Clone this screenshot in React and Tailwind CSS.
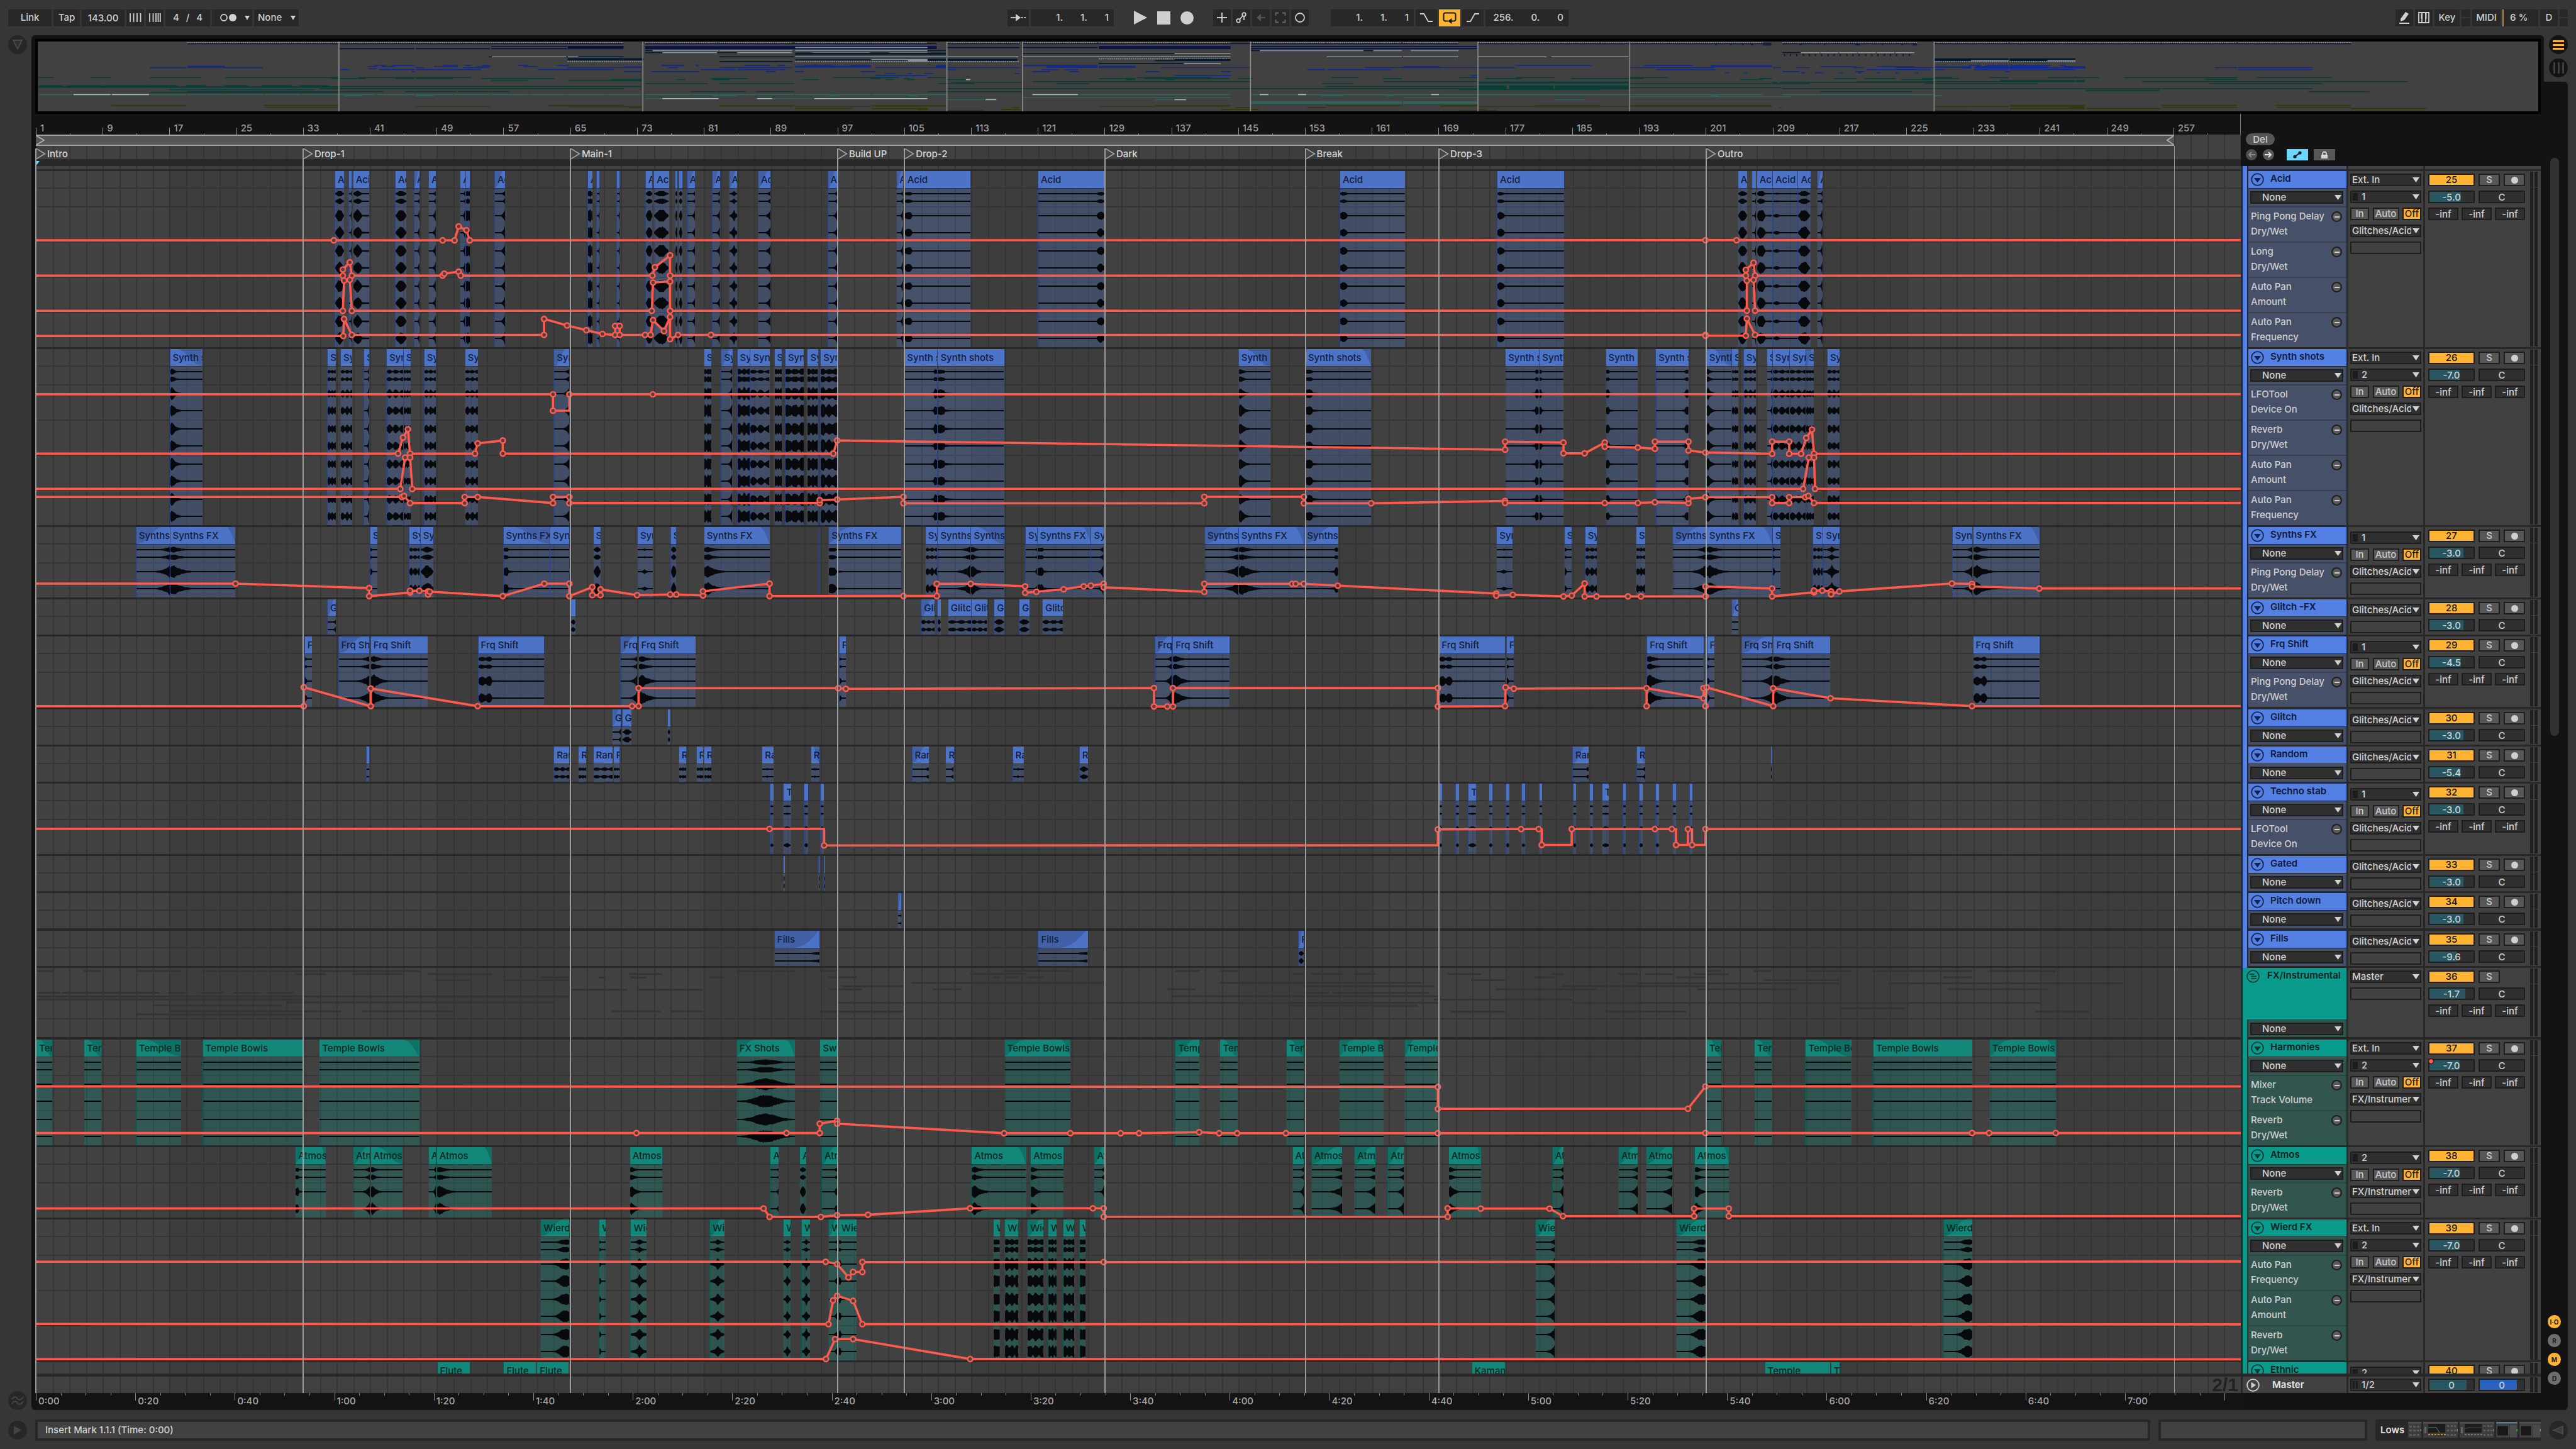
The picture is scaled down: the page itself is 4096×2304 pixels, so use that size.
import React from "react";

/* ------------------------------------------------------------------ */
/* Arrangement geometry                                               */
/* ------------------------------------------------------------------ */

const SPAN = 3506; // drawing units across the 264 visible bars
const BARS = 264;
const TRACKS_TOP = 264;

// Each zone maps its own drawing units to arrangement units: [x0, dx, y0, dy].
const Z = [-57.2, 0.65306, 0, 0.35714];
const Y = [966.8, 0.9694, 0, 0.35714];
const W = [2662.8, 0.87755, 0, 0.35714];
const A1 = [-57.2, 0.86735, 480, 0.5102];
const A2 = [-57.2, 0.86735, 1248, 0.67347];
const B1 = [1062.8, 0.81633, 240, 0.5102];
const B2 = [1062.8, 0.81633, 1000, 0.79082];
const C1 = [2222.8, 0.82143, 240, 0.66327];
const C2 = [2222.8, 0.82143, 1248, 0.63265];

const mapX = (z, x) => z[0] + x * z[1];
const mapY = (z, y) => z[2] + y * z[3] - TRACKS_TOP;

function clips(zone, text, label) {
  return text.split(" ").map((item) => {
    const m = item.match(/^(\d+)-(\d+)([a-zA-Z])([<>(){]*)$/);
    const x = Math.max(0, mapX(zone, +m[1]));
    return { x, w: mapX(zone, +m[2]) - x, wave: m[3], fade: m[4], label };
  });
}

/* ------------------------------------------------------------------ */
/* Tracks                                                             */
/* ------------------------------------------------------------------ */

const ACID = "Glitches/Acid";
const FXI = "FX/Instrumental";

const TRACKS = [
  {
    name: "Acid", num: 25, vol: "-5.0", fill: 72, ext: true, ch: "1", out: ACID,
    autos: [["Ping Pong Delay", "Dry/Wet"], ["Long", "Dry/Wet"], ["Auto Pan", "Amount"], ["Auto Pan", "Frequency"]],
    clips: [
      ...clips(Z, "815-838b 849-857r 859-899B 962-990b 1008-1022r< 1043-1061r 1120-1133r 1133-1144x 1204-1230r< 1430-1443x 1452-1460r 1501-1509r"),
      ...clips(Y, "2-14b 16-41b 51-55b 57-63b 70-84r< 112-125r< 139-153p< 187-208r< 301-317r< 414-425r< 427-536a 646-755z 1141-1248a 1399-1509a"),
      ...clips(W, "49-66b 74-82r 83-112B 112-158q 158-181b 193-203r<"),
    ],
  },
  {
    name: "Synth shots", num: 26, vol: "-7.0", fill: 68, ext: true, ch: "2", out: ACID,
    autos: [["LFOTool", "Device On"], ["Reverb", "Dry/Wet"], ["Auto Pan", "Amount"], ["Auto Pan", "Frequency"]],
    clips: [
      ...clips(A1, "311-371d> 600-616m 624-646m 667-677r 708-739m 739-753m 777-799m 852-876m 1015-1044r< 1290-1304x 1322-1343r< 1351-1375x 1375-1411m 1419-1433x 1439-1474x 1480-1500x 1504-1535x"),
      ...clips(B1, "389-454e 454-584s 1040-1103d> 1170-1299s)"),
      ...clips(C1, "138-203e 204-251s 332-395s 429-493e 527-576d> 576-590m 599-623m 644-655r 655-688m 688-720m 720-736m< 761-785m"),
    ],
  },
  {
    name: "Synths FX", num: 27, vol: "-3.0", fill: 77, ch: "1", out: ACID,
    autos: [["Ping Pong Delay", "Dry/Wet"]],
    clips: [
      ...clips(A1, "249-311r< 311-432d) 678-692d 750-770m 770-795b 922-1008s> 1008-1044f 1087-1101b 1168-1197g 1229-1240b 1290-1411d) 1501-1503f"),
      ...clips(B1, "242-384s( 430-453m 454-519r 519-584d> 625-648e 648-753s) 753-778r 974-1040r< 1040-1168d) 1168-1235e<"),
      ...clips(C1, "121-153g 252-267d 292-316m 391-409m 462-526r< 527-655d) 655-671d 733-753m 753-785p 1003-1042r 1043-1172d)"),
    ],
  },
  {
    name: "Glitch -FX", num: 28, vol: "-3.0", fill: 77, out: ACID, autos: [],
    clips: [
      ...clips(A1, "600-616r< 1046-1055b"),
      ...clips(B1, "422-449m< 454-461b 474-520m 520-551m 564-584b 613-633b 658-698m"),
      ...clips(C1, "576-590f<"),
    ],
  },
  {
    name: "Frq Shift", num: 29, vol: "-4.5", fill: 72, ch: "1", out: ACID, wideGap: true,
    autos: [["Ping Pong Delay", "Dry/Wet"]],
    clips: [
      ...clips(A1, "558-572d 620-677r< 679-784d 876-998S 1137-1168r< 1170-1275d"),
      ...clips(B2, "262-276d 877-910r< 912-1023d"),
      ...clips(C1, "9-138S 140-155d 412-522d 528-543d 595-655r< 657-767d 1043-1173S"),
    ],
  },
  {
    name: "Glitch", num: 30, vol: "-3.0", fill: 77, out: ACID, autos: [],
    clips: clips(A1, "1122-1138r< 1140-1158b 1224-1229b"),
  },
  {
    name: "Random", num: 31, vol: "-5.4", fill: 71, out: ACID, autos: [],
    clips: [
      ...clips(A1, "671-677f 1015-1044m 1060-1075m 1087-1123m 1124-1136m 1244-1258m 1276-1289m 1290-1304m"),
      ...clips(B2, "112-135g 207-225g> 404-437e< 470-486r 600-623g 730-747b"),
      ...clips(C1, "268-300e< 392-409r> 651-654b"),
    ],
  },
  {
    name: "Techno stab", num: 32, vol: "-3.0", fill: 77, ch: "1", out: ACID,
    autos: [["LFOTool", "Device On"]],
    clips: [
      ...clips(B2, "128-135o 154-169o 194-202o 226-233o"),
      ...clips(C1, "10-16o 42-49o 66-82o 106-113o 139-146o 170-177o 204-210o 269-275o 301-308o 325-339o 365-372o 397-405o 429-436o 462-469o 494-501o"),
    ],
  },
  {
    name: "Gated", num: 33, vol: "-3.0", fill: 77, out: ACID, autos: [],
    clips: clips(B2, "154-157x 222-225x 233-236x"),
  },
  {
    name: "Pitch down", num: 34, vol: "-3.0", fill: 77, out: ACID, autos: [], wideGap: true,
    clips: clips(B2, "376-384r<"),
  },
  {
    name: "Fills", num: 35, vol: "-9.6", fill: 61, out: ACID, autos: [],
    clips: clips(B2, "136-225l{ 650-747l{ 1157-1168b<"),
  },
  { name: "FX/Instrumental", num: 36, vol: "-1.7", fill: 82, group: true, wideGap: true, teal: true, clips: [], autos: [] },
  {
    name: "Harmonies", num: 37, vol: "-7.0", fill: 68, ext: true, ch: "2", out: FXI, teal: true, automated: true,
    autos: [["Mixer", "Track Volume"], ["Reverb", "Dry/Wet"]],
    clips: [
      ...clips(A2, "66-96f> 154-186f> 249-332f> 371-555f 585-769f)", "Temple Bowls"),
      ...clips(A2, "1350-1457P()", "FX Shots"),
      ...clips(A2, "1503-1535f", "Swish"),
      ...clips(B2, "584-713f() 917-964f< 1004-1039f> 1133-1168f> 1236-1323f() 1364-1429f(", "Temple Bowls"),
      ...clips(C2, "527-557f> 620-654f> 719-808f> 850-1042f 1075-1204f()", "Temple Bowls"),
    ],
  },
  {
    name: "Atmos", num: 38, vol: "-7.0", fill: 68, ch: "2", out: FXI, teal: true,
    autos: [["Reverb", "Dry/Wet"]],
    clips: [
      ...clips(A2, "541-598s() 647-678r< 679-738d> 785-799r 800-902d) 1154-1214d 1412-1428e 1466-1478b 1506-1535e<"),
      ...clips(B2, "520-627d) 635-700d 759-780r< 1145-1168r 1182-1243r< 1266-1307r< 1331-1363r<"),
      ...clips(C2, "28-92d) 229-251r< 357-395r< 410-462r< 504-571d)"),
    ],
  },
  {
    name: "Wierd FX", num: 39, vol: "-7.0", fill: 68, ext: true, ch: "2", out: FXI, teal: true,
    autos: [["Auto Pan", "Frequency"], ["Auto Pan", "Amount"], ["Reverb", "Dry/Wet"]],
    clips: [
      ...clips(A2, "991-1044k< 1098-1111d 1156-1186p 1301-1328p< 1436-1450p 1469-1485p"),
      ...clips(B2, "242-261r< 261-297s 563-576x 585-612x 629-661x< 669-686x 698-721x 730-743x"),
      ...clips(C2, "196-234r< 469-526k< 986-1042k<"),
    ],
  },
  {
    name: "Ethnic", num: 40, vol: "-7.0", fill: 68, ch: "2", out: FXI, teal: true, autos: [],
    clips: [
      ...clips(A2, "801-861f 923-983f 984-1043f", "Flute"),
      ...clips(C2, "73-138f", "Kaman"),
      ...clips(C2, "640-767f 768-785f", "Temple"),
    ],
  },
];

const LOCATORS = [
  [1, "Intro"], [33, "Drop-1"], [65, "Main-1"], [97, "Build UP"], [105, "Drop-2"],
  [129, "Dark"], [153, "Break"], [169, "Drop-3"], [201, "Outro"],
];

/* ------------------------------------------------------------------ */
/* Automation: zone, then "x,y" points; "!" hides the breakpoint       */
/* ------------------------------------------------------------------ */

const AUTOMATION = [
  [Z, "88,1070! 813,1070 1078,1070 1107,1070 1117,1008 1136,1025 1144,1070", C1, "526,214 586,214 1560,214!"],
  [Z, "88,1227! 835,1227 835,1200 852,1168 857,1227 1078,1227 1082,1218 1117,1210 1122,1227", Y, "14,1227 18,1190 43,1137 43,1227", C1, "604,299 604,285 619,268 622,299 1560,299!"],
  [Z, "88,1384! 835,1384 838,1249 852,1246 857,1384", Y, "13,1384 15,1258 43,1253 43,1384", C1, "606,383 606,311 619,309 622,383 1560,383!"],
  [Z, "88,1496! 836,1496 838,1420 857,1491 1325,1491 1325,1420 1381,1449 1428,1470 1467,1487 1498,1491 1498,1451 1509,1451 1509,1491", Y, "2,1491 11,1491 15,1425 33,1474 43,1411 43,1510 56,1491 110,1491", C1, "526,441 526,443 604,443 606,402 622,441 1560,441!"],
  [A1, "66,288! 1014,288 1014,339 1044,339! 1044,288 1197,288", C1, "1560,583!"],
  [A1, "66,473! 730,473 739,423 748,397 752,473 871,473 876,441 922,432 922,473 1528,473 1535,432", B1, "1560,931 1560,906", C1, "251,699 251,725 292,725 331,699 331,709 395,711 428,714 428,697 493,697 493,718 526,723 655,726 655,697 688,697 688,726 711,726 721,688 732,668 736,726 1560,726!"],
  [A1, "66,583! 734,583 743,485 752,485 756,583", C1, "715,810 726,735 736,735 738,810 1560,810!"],
  [A1, "66,608! 737,608 741,605 752,627 852,627 852,608 876,608 1014,627 1014,608 1044,608 1044,627 1503,627 1503,618 1535,616", B1, "388,1078 388,1098 974,1098 974,1078 1168,1078 1168,1098 1299,1098", C1, "138,839 138,844 331,844 395,844 428,842 493,844 493,834 526,830 655,830 655,844 688,844 688,830 719,830 725,827 736,844 1560,844!"],
  [A1, "66,878! 432,878 677,892 677,917 752,906 752,900 769,900 785,902 785,912 788,903 922,917 998,878 1044,878 1044,917 1086,889 1086,914 1101,914 1101,896 1168,914 1229,912 1240,912 1289,915 1289,902 1411,878 1411,917", B1, "388,1387 453,1387 453,1349 519,1349 625,1357 625,1377 647,1374 700,1366 739,1357 753,1355 778,1349 778,1360 974,1374 974,1349 1145,1349 1152,1349 1168,1349 1234,1355", C1, "121,1061 121,1066 153,1064 251,1068 267,1066 292,1037 292,1068 315,1068 376,1068 401,1068 526,1068 526,1044 655,1049 655,1068 736,1058 736,1054 752,1054 769,1056 769,1063 785,1056 1003,1037 1042,1038 1042,1044 1172,1049 1560,1049!"],
  [A1, "66,1260! 557,1260 557,1201 680,1260 680,1205 876,1260 1159,1260 1171,1260 1171,1204 1537,1204 1551,1206", B2, "876,119 876,156 902,156 913,156 913,119 1429,119 1429,156", C1, "138,1331 139,1286 155,1289 412,1288 412,1331 412,1288! 522,1312 522,1288 526,1331 528,1286 657,1331 657,1288 768,1312 1042,1331 1560,1331!"],
  [A2, "66,104! 1411,104 1511,104! 1511,143", B2, "1429,435! 1429,403", C2, "169,111 203,111 209,111! 209,151 267,151! 267,111 428,111 461,111 469,111! 469,151 492,151! 492,111 500,111! 500,151 526,151! 526,111 1560,111!"],
  [A2, "66,712!", B2, "1429,921 1429,965", C2, "492,814 526,758 1560,758!"],
  [A2, "66,822! 1167,822 1442,822 1503,822 1503,800 1535,793 1535,800", B2, "584,1014 713,1014 811,1014 847,1014 964,1012 1003,1014 1038,1014 1133,1014 1429,1014", C2, "526,875 1042,875 1075,875 1204,875 1560,875!"],
  [A2, "66,1000! 1400,1000 1411,1020 1505,1020 1535,1016", B2, "319,1178 518,1165 757,1165 778,1165 778,1182 1448,1182 1448,1165", C2, "91,1065 224,1065 250,1084 504,1084 504,1065 571,1065 571,1084 1560,1084!"],
  [A2, "66,1126! 1514,1126", B2, "259,1277 281,1304 290,1293 308,1293 308,1273 778,1273", C2, "1560,1198!"],
  [A2, "66,1273!", B2, "242,1398 251,1350 259,1341 290,1351 308,1398", C2, "1560,1356!"],
  [A2, "66,1356!", B2, "237,1468 255,1428 290,1428 518,1468", C2, "1560,1444!"],
];

function readCurve(parts) {
  const pts = [];
  for (let i = 0; i < parts.length; i += 2) {
    for (const p of parts[i + 1].split(" ")) {
      const [x, y] = p.replace("!", "").split(",").map(Number);
      pts.push({ x: mapX(parts[i], x), y: mapY(parts[i], y), node: !p.endsWith("!") });
    }
  }
  pts[0].x = 0;
  pts[pts.length - 1].x = SPAN;
  return pts;
}

function Automation() {
  return (
    <svg className="pointer-events-none absolute top-0 left-0 h-[1920px] w-full" viewBox={`0 0 ${SPAN} 1920`} preserveAspectRatio="none" aria-hidden="true">
      {AUTOMATION.map((parts, i) => {
        const pts = readCurve(parts);
        return (
          <g key={i} stroke="#ff5a4c">
            <polyline points={pts.map((p) => `${p.x.toFixed(1)},${p.y.toFixed(1)}`).join(" ")} fill="none" strokeWidth="3.6" strokeLinejoin="round" />
            {pts.filter((p) => p.node).map((p, j) => (
              <circle key={j} cx={p.x} cy={p.y} r="4" fill="#4a4144" strokeWidth="2.6" />
            ))}
          </g>
        );
      })}
    </svg>
  );
}

/* ------------------------------------------------------------------ */
/* Clips and wave forms                                               */
/* ------------------------------------------------------------------ */

function envelope(kind, t) {
  switch (kind) {
    case "b": return 0.8 * Math.pow(Math.sin(Math.PI * Math.min(1, t)), 1.1) + 0.08;
    case "B": return t < 0.55 ? 0.9 * Math.sin((Math.PI * (t + 0.05)) / 0.62) : 0.12;
    case "f": return 0.05;
    case "g": return 0.05 + 0.35 * Math.exp(-Math.abs(t - 0.45) * 9);
    case "a": return t < 0.1 ? 0.3 + 0.3 * Math.sin(t * 31) : 0.06;
    case "z": return envelope("a", 1 - t);
    case "s": return t < 0.1 ? 0.5 * Math.sin(Math.PI * (0.25 + t * 5)) + 0.15 : 0.05 + 0.35 * Math.exp(-t * 9);
    case "e": return envelope("s", 1 - t);
    case "q": return t < 0.3 ? 0.3 * Math.sin((Math.PI * t) / 0.3) : 0.05;
    case "d": return t < 0.05 ? 0.6 + t * 8 : 0.95 * Math.exp(-(t - 0.05) * 8);
    case "r": return 0.95 * Math.exp(-(1 - t) * 5.5);
    case "l": return 0.5 * Math.exp(-(1 - t) * 4);
    case "k": return 0.08 + 0.8 * Math.exp(-Math.pow((t - 0.85) * 4.5, 2));
    case "p": return 0.1 + 0.9 * Math.exp(-Math.abs(t - 0.55) * 6);
    case "m": return 0.12 + 0.5 * Math.abs(Math.sin(t * Math.PI * 2.5 + 0.3));
    case "x": return 0.45 + 0.5 * Math.abs(Math.sin(t * Math.PI * 2.5 + 0.6));
    case "S": return t < 0.2 ? 0.3 + 0.4 * Math.abs(Math.sin(t * 30)) : 0.1 * (1 - t) + 0.04;
    case "P": return 0.08 + 0.8 * Math.exp(-Math.pow((t - 0.5) * 4.2, 2));
    default: return 0.32 * Math.sin(Math.PI * t);
  }
}

function wavePath(kind, w, cy, amp, seed) {
  let s = seed * 7919 + 13;
  const top = [];
  const bottom = [];
  const n = Math.max(3, Math.round(w / 2));
  for (let i = 0; i <= n; i++) {
    s = (s * 1103515245 + 12345) % 2147483648;
    const h = Math.max(1.1, envelope(kind, i / n) * amp * (0.75 + (0.25 * s) / 2147483648));
    const x = ((i / n) * w).toFixed(1);
    top.push(`${x},${(cy - h).toFixed(1)}`);
    bottom.unshift(`${x},${(cy + h).toFixed(1)}`);
  }
  return `M${top.join("L")}L${bottom.join("L")}Z`;
}

function fadePath(fade, w) {
  let d = "";
  if (fade.includes("<")) d += `M0 0V27C${w * 0.4} 25 ${w * 0.45} 2 ${w * 0.8} 0Z`;
  if (fade.includes(">")) d += `M${w} 0V27C${w * 0.6} 25 ${w * 0.55} 2 ${w * 0.2} 0Z`;
  if (fade.includes("(")) d += `M0 0V27C${w * 0.1} 20 ${w * 0.12} 4 ${w * 0.3} 0Z`;
  if (fade.includes(")")) d += `M${w} 0V27C${w * 0.96} 18 ${w * 0.92} 4 ${w * 0.86} 0Z`;
  if (fade.includes("{")) d += `M0 0V27H${w * 0.45}C${w * 0.75} 24 ${w * 0.85} 8 ${w * 0.97} 0Z`;
  return d;
}

const pct = (v) => `${((v / SPAN) * 100).toFixed(3)}%`;

function Clip({ clip, track, height, seed }) {
  const { x, w, wave, fade } = clip;
  const centres = [[8, 5.5], [20, 5.5]];
  for (let i = 0; i < track.autos.length; i++) centres.push([28 + i * 56 + 15, 12], [28 + i * 56 + 42, 12]);
  const bodyH = height - 28;
  return (
    <div className="absolute inset-y-0 flex flex-col overflow-hidden" style={{ left: pct(x), width: pct(w) }}>
      <div className={`relative flex h-[27px] shrink-0 items-center overflow-hidden border-l pl-1 ${track.teal ? "border-[#0b5a50] bg-[#138779]" : "border-[#2c4584] bg-[#4d73c6]"}`}>
        {fade && (
          <svg className="absolute inset-0 h-full w-full" viewBox={`0 0 ${w} 27`} preserveAspectRatio="none" aria-hidden="true">
            <path d={fadePath(fade, w)} fill={track.teal ? "#0f7166" : "#4160a5"} />
          </svg>
        )}
        {w > 8 && <span className={`relative whitespace-nowrap ${track.teal ? "text-[#062722]" : "text-[#121d3a]"}`}>{clip.label || track.name}</span>}
      </div>
      <div className={`mt-px min-h-0 flex-1 border-l ${track.teal ? "border-[#0b5a50] bg-[#0a9b8c]/25" : "border-[#2c4584] bg-[#5480e4]/25"}`}>
        <svg className="block h-full w-full" viewBox={`0 0 ${w} ${bodyH}`} preserveAspectRatio="none" aria-hidden="true">
          <path d={centres.map(([cy, amp], i) => wavePath(wave, w, cy, amp, seed + (i % 2))).join("")} fill="#07090d" />
        </svg>
      </div>
    </div>
  );
}

/* ------------------------------------------------------------------ */
/* Group overview lines                                               */
/* ------------------------------------------------------------------ */

const GROUP_LINES = [
  [A2, "66-97,439 154-186,439 249-332,439 372-583,439 585-769,439 541-598,446 647-738,446 785-902,446 799-861,461 923-1043,461 991-1043,454 66-111,490 114-293,490 308-340,490 368-409,490 429-477,490 489-538,490 66-1043,499 66-555,506 525-1015,513 280-517,520 311-626,534 663-830,534 249-555,541 1045-1150,483 1168-1289,483 1122-1211,534 1229-1289,534 1350-1457,439 1154-1214,446 1156-1185,454 1098-1111,454 1301-1328,454"],
  [B2, "226-259,687 225-388,769 242-297,700 267-388,718 242-307,724 404-778,711 445-502,724 518-627,693 584-713,687 563-576,700 585-612,700 629-661,700 261-1429,751 917-964,687 1004-1039,687 902-957,724 909-1429,738 1005-1396,711 1146-1168,693 1182-1243,693 1168-1423,718 1168-1218,731 1224-1412,731 1138-1389,757 1266-1307,693 1454-1560,769"],
  [C2, "27-91,475 72-138,490 120-315,513 0-267,539 33-138,569 195-234,483 229-251,475 249-526,505 267-1173,547 332-489,569 357-395,475 409-462,475 395-785,498 469-526,483 504-571,475 510-703,513 527-557,467 620-654,467 639-785,490 719-808,467 785-912,561 850-1042,467 880-1334,498 986-1042,483 995-1188,513 1075-1204,467 1165-1269,569"],
];

function GroupLines() {
  return (
    <svg className="absolute inset-0 h-full w-full" viewBox={`0 0 ${SPAN} 110`} preserveAspectRatio="none" aria-hidden="true">
      {GROUP_LINES.flatMap(([z, text]) =>
        text.split(" ").map((t) => {
          const [, a, b, y] = t.match(/(\d+)-(\d+),(\d+)/);
          return <rect key={`${z[0]}${t}`} x={mapX(z, +a)} y={mapY(z, +y) - 1276} width={mapX(z, +b) - mapX(z, +a)} height="3" fill="#343434" />;
        })
      )}
    </svg>
  );
}

/* ------------------------------------------------------------------ */
/* Set overview                                                       */
/* ------------------------------------------------------------------ */

const O1 = [-60, 0.65306];
const O2 = [964, 0.9694];
const O3 = [2660, 0.87755];
const INK = { n: "#03104d", w: "#87919c", k: "#05192d", b: "#12288c", g: "#053f36", t: "#30635a", l: "#a8beb8", y: "#303a05" };

// colour, y, height, spans; "~" marks a row of short repeated notes
const OVERVIEW = [
  [O1, "w~,190,5,456-1518 n,195,4,456-1518 n,217,5,826-1009,1012-1193,1196-1380,1382-1518 n,207,4,1196-1380 n,209,9,1382-1518 k,253,4,1190-1518 w,253,4,1198-1379,1382-1408 k,264,9,1382-1568 w~,275,5,1382-1562"],
  [O1, "b,302,5,365-453,548-640 b,299,9,456-548 b,293,4,912-940,953-1010,1079-1113,1132-1147,1172-1194,1261-1286,1356-1386 b,297,4,895-918,930-963,1057-1116,1160-1194,1276-1310 b,302,4,1012-1033,1127-1190,1382-1562 b,307,4,897-918 b,311,5,828-850,924-1009,1013-1171,1310-1494 b,320,5,1002-1010,1519-1562 b,299,6,1519-1562"],
  [O1, "g,347,4,93-131,220-270,365-490,549-826,872-1147 g,351,4,806-891,964-1009,1014-1102,1172-1350 g,360,4,1196-1286,1382-1562 g,356,4,1485-1562 g,383,4,93-154,162-252,255-356,358-432,453-500,545-604,637-709,728-801 g,389,7,93-824 g,387,5,824-1562 g,397,4,779-1518 g,401,4,412-767 g,410,4,456-933,987-1112,1115-1240 g,414,5,365-824 t,423,5,93-177,365-454,457-547,549-640,643-733,736-824,826-915,918-1010,1012-1103,1105-1194,1196-1286,1288-1380,1382-1471,1473-1562 l,423,5,179-269,272-363 t,428,4,838-883,1012-1057 y,472,5,272-454,642-824,1335-1518 y,482,4,644-824,1530-1562 y,477,4,1012-1194,1382-1562"],
  [O2, "w~,190,5,2-122,124-243,248-372,374-465,497-616,621-744,746-868,870-962,995-1118,1120-1243,1245-1336,1368-1568,1570-1750 n,195,4,2-480,497-616,621-994,995-1336,1368-1750 n,212,13,2-480 w,212,4,248-465 n,212,4,497-616,621-744 n,212,13,746-962 n,208,5,995-1367 n,217,5,995-1367 w,226,4,14-122,124-243,248-465 k,226,4,2-14,465-495 k,235,4,2-152 w,235,4,30-120,153-243,277-370,402-465 k,239,8,248-495 w,239,4,870-962 k,239,4,621-870 w,226,4,1010-1180,1196-1243,1258-1336 k,226,4,995-1010,1180-1196 w,253,4,248-495,497-614,621-962,1120-1243,1245-1336,1368-1480,1488-1615 k,253,4,124-246"],
  [O2, "k,267,9,373-495,497-612 w,266,5,373-465 k,267,5,248-372 w~,275,5,248-372,374-495,497-616 k,275,4,124-243 w,271,9,433-465 w~,262,4,746-868,870-962 k,268,9,870-962 k,271,4,838-870 k,284,4,746-884 w,284,4,886-946 b,293,5,28-66,85-90,164-207,220-231,262-310,340-372,480-495,621-744 b,298,8,248-372 b,302,4,40-56,124-243,380-495,497-616 b,299,9,746-806,660-744,478-495 b,302,4,848-994 b,311,4,93-150,153-232,497-512,652-680,690-712 b,320,5,12-90,200-216,248-262,356-380,637-666,698-714,823-846,947-962 b,329,4,395-412,432-439,460-475,608-616 b,338,4,380-465,870-962,1356-1367 b,302,4,1182-1367,1617-1750 b,298,6,1245-1305 b,293,4,1430-1554,1640-1720 b,302,5,1368-1428 b,311,4,1088-1118,1121-1226,1660-1750"],
  [O2, "g,347,4,310-418,465-495,809-931,1128-1171,1337-1367,1430-1494,1617-1680 g,351,4,110-170,372-387,426-436,746-806,820-960,974-998,1212-1243,1380-1440,1520-1640 g,356,4,53-68,112-140,260-286,397-408,432-444,497-530,790-806,855-870 l,356,4,528-535 g,365,4,637-994,1213-1367 g,369,9,1368-1615 g,369,4,504-620 g,374,4,2-105,124-246,482-542,676-730,1112-1164,1617-1750 g,387,4,1119-1367 g,391,18,1368-1415,1419-1492,1494-1615 g,392,4,1617-1750 g,397,5,497-620,621-1367 g,401,4,1337-1568 g,410,4,76-167,184-246,465-620"],
  [O2, "t,423,5,2-122,124-184,186-246,248-372,374-495,714-962,995-1367,1368-1750 l,423,5,637-712,1010-1024,1073-1086,1291-1304 t,428,4,112-152,304-320,433-448,1108-1148,1215-1230 t,437,4,621-962,1245-1367 t,433,4,1617-1750 t,441,4,2-28,184-276 l,441,4,30-122,186-210,279-465 t,446,4,497-558,838-868,1494-1542 l,446,4,560-578,870-889 t,459,13,995-1243,1245-1367 y,474,7,124-246,374-495,838-962,1306-1367 y,477,4,248-372,746-838,1368-1615 y,486,4,248-340,374-465 y,474,8,1617-1750 y,482,4,604-616,970-994,1088-1118 y,490,5,450-465,586-616,947-1008,1368-1380 y,472,4,1119-1243,1462-1568 y,495,4,497-558,1337-1398"],
  [O3, "w~,190,5,0-95,130-266,267-335,337-374,405-541,543-679,681-816,818-954,956-1092,1094-1161 n,195,4,0-110,130-374,405-1161 n,200,4,8-12,35-38,57-60,73-77,95-110,161-165,205-208,262-270,310-313,345-349,366-374 k,235,4,130-162 w,235,4,164-197,199-231,233-265,267-299,301-333,335-369 k,246,9,133-135,144-146,155-157,167-169,178-180,189-191,200-202,212-214,223-225,234-236,246-248,257-259,268-270,280-282,291-293,302-304,314-316,325-327,336-338,348-350,359-361 k,267,13,405-540,542-661 w,271,5,472-540,610-661 w~,275,4,405-540,542-661"],
  [O3, "b,295,8,0-111 b,302,4,0-7,113-128,155-180 b,298,4,199-265,301-369 b,302,4,257-277,335-405 b,300,7,405-472 b,293,4,468-490,498-540,542-617,632-644 b,298,5,479-540,542-610,640-679 b,304,5,456-472,478-679 b,302,4,913-954,956-1091 b,311,4,283-399,405-423,477-540,542-661,956-1091 b,311,4,0-10 b,320,4,130-161,262-279,533-541 b,325,3,26-33,60-67,164-171,189-204,233-240,267-273,301-307,335-341,370-376"],
  [O3, "g,347,4,405-438,505-540,611-704,749-954,990-1126 g,351,4,88-111,223-265,279-335,383-450 g,356,4,53-95,345-405,895-954 g,360,5,525-660,663-678 g,365,4,266-678,782-1263 g,369,5,111-121,126-405 g,374,4,0-180,387-593,903-1109 g,392,4,0-128 g,397,4,130-816,818-1091 g,405,3,680-814 g,410,4,199-364,1083-1194 t,423,5,0-95,130-404 t,428,3,404-421,0-14 t,433,4,0-146 y,474,8,0-111 y,482,4,125-129,650-677 y,477,5,405-540 y,472,5,543-678,817-954,1023-1160 y,477,4,543-678 y,486,4,543-678,680-816,1161-1297 y,482,4,819-954,1026-1160 y,495,4,405-472"],
];
const OVERVIEW_MARKS = [[O1, 824], [O1, 1564], [O2, 496], [O2, 620], [O2, 994], [O2, 1367], [O2, 1616], [O3, 404]];

function Overview() {
  return (
    <svg className="block h-full w-full" viewBox="0 0 3976 112" preserveAspectRatio="none" role="img" aria-label="Arrangement overview">
      {OVERVIEW.flatMap(([z, text], gi) =>
        text.split(" ").map((row, ri) => {
          const [ink, y, h, ...spans] = row.split(",");
          const dash = ink.endsWith("~");
          const d = spans.map((s) => {
            const [a, b] = s.split("-").map(Number);
            return `M${(z[0] + a * z[1]).toFixed(1)} 0H${(z[0] + b * z[1]).toFixed(1)}`;
          }).join("");
          return (
            <path key={`${gi}-${ri}`} d={d} transform={`translate(0 ${(y * 0.35714 - 66).toFixed(1)})`} stroke={INK[ink[0]]} strokeWidth={Math.max(1.6, h * 0.357)} strokeDasharray={dash ? "2 1.4" : undefined} fill="none" />
          );
        })
      )}
      {OVERVIEW_MARKS.map(([z, x]) => (
        <rect key={`${z[0]}-${x}`} x={z[0] + x * z[1]} y="0" width="1.6" height="112" fill="#8c8c8c" />
      ))}
    </svg>
  );
}

/* ------------------------------------------------------------------ */
/* Controls                                                           */
/* ------------------------------------------------------------------ */

const LANE = "bg-[repeating-linear-gradient(90deg,#353535_0_2px,transparent_2px_calc(100%/132)),repeating-linear-gradient(90deg,#414141_0_calc(100%*16/264),#3d3d3d_calc(100%*16/264)_calc(100%*32/264))]";

function Drop({ value, label, className = "", meter, narrow }) {
  return (
    <div className={`relative h-5 shrink-0 ${className}`}>
      <select aria-label={label} defaultValue={value} className={`h-full w-full cursor-pointer appearance-none overflow-hidden border-2 border-[#1e1e1e] bg-[#303030] pr-[14px] leading-4 text-[#d2d2d2] ${narrow ? "pl-[17px]" : meter ? "pl-4" : "pl-px"}`}>
        <option>{value}</option>
      </select>
      {meter && <span className={`pointer-events-none absolute top-1 left-[4px] h-3 ${meter === 2 ? "w-2 border-x-[3px] border-[#1c1c1c] bg-[#303030]" : "w-2 bg-[#1c1c1c]"}`} />}
      <svg className="pointer-events-none absolute top-[6px] right-[3px] h-2 w-[11px]" viewBox="0 0 11 8" aria-hidden="true">
        <path d="M0 0H11L5.5 8Z" fill="#d2d2d2" />
      </svg>
    </div>
  );
}

function Slot({ label }) {
  return <input aria-label={label} className="h-5 w-full shrink-0 border-2 border-[#1e1e1e] bg-transparent" />;
}

const KEY = "flex h-5 shrink-0 items-center justify-center border-2 border-[#1e1e1e] leading-4";

function Value({ value, label, fill, className = "w-[74px]", color = "#285761" }) {
  return (
    <input
      aria-label={label}
      defaultValue={value}
      className={`h-5 shrink-0 border-2 border-[#1e1e1e] bg-[#303030] text-center leading-4 text-[#d2d2d2] ${className}`}
      style={fill ? { backgroundImage: `linear-gradient(90deg, ${color} ${fill}%, transparent ${fill}%)` } : undefined}
    />
  );
}

function FoldIcon({ teal }) {
  const c = teal ? "#063a34" : "#14244f";
  return (
    <svg className="h-[21px] w-[21px]" viewBox="0 0 21 21" aria-hidden="true">
      <circle cx="10.5" cy="10.5" r="9.4" fill="none" stroke={c} strokeWidth="1.8" />
      <path d="M5 8H16L10.5 15.5Z" fill={c} />
    </svg>
  );
}

function MixerRow({ t }) {
  const bg = t.teal ? "bg-[#0a9b8c]" : "bg-[#5480e4]";
  const body = t.teal ? "bg-[#335550]" : "bg-[#465069]";
  const three = t.autos.length > 0 || t.group || t.name === "Ethnic";
  const gap = t.wideGap ? "mb-1" : "mb-[3px]";
  return (
    <div className="flex w-[477px] shrink-0 pl-[3px]">
      <div className={`w-[7px] shrink-0 ${bg}`} />
      {t.group ? (
        <div className={`flex w-[158px] shrink-0 flex-col ${gap}`}>
          <div className={`-ml-[7px] flex h-[82px] items-start gap-3 pt-0.5 pl-1.5 ${bg}`}>
            <svg className="mt-px h-[21px] w-[21px] shrink-0" viewBox="0 0 21 21" aria-hidden="true">
              <g fill="none" stroke="#063a34" strokeWidth="1.8">
                <circle cx="10.5" cy="10.5" r="9.4" />
                <path d="M5 6.8H12.5M7.5 10.5H16M7.5 14.2H16" />
              </g>
            </svg>
            <span className="font-semibold text-[#04201c]">FX/Instrumental</span>
          </div>
          <div className={`ml-0.5 flex flex-1 items-center border-t border-[#24403c] px-[3px] ${body}`}>
            <Drop value="None" label="FX/Instrumental automation" className="w-[148px]" narrow />
          </div>
        </div>
      ) : (
        <div className={`ml-0.5 flex w-[156px] shrink-0 flex-col ${gap}`}>
          <div className={`flex h-[27px] shrink-0 items-center gap-[10px] pl-1 ${bg}`}>
            <button type="button" aria-label={`Fold ${t.name}`}><FoldIcon teal={t.teal} /></button>
            <span className={`-mt-1 font-semibold ${t.teal ? "text-[#04201c]" : "text-[#0e1a3a]"}`}>{t.name}</span>
          </div>
          <div className={`mt-px flex h-7 shrink-0 items-center px-[3px] ${body}`}>
            <Drop value="None" label={`${t.name} device`} className="w-[148px]" narrow />
          </div>
          {t.autos.map(([a, b], i) => (
            <div key={i} className={`flex h-14 shrink-0 items-start justify-between border-t-2 pt-0.5 pr-[7px] pl-1 ${body} ${t.teal ? "border-[#2c4642]" : "border-[#3a3f4c]"}`}>
              <p className="leading-6 text-[#cfcfcf]">{a}<br />{b}</p>
              <button type="button" aria-label={`Hide ${a} ${b}`} className="mt-1 flex h-[17px] w-[17px] items-center justify-center rounded-full border-2 border-[#1e1e1e] bg-[#5a5a5a]">
                <span className="h-0.5 w-2 bg-[#cfcfcf]" />
              </button>
            </div>
          ))}
        </div>
      )}
      <div className={`ml-[3px] flex w-[119px] shrink-0 flex-col gap-[7px] bg-[#414141] px-[3px] ${gap} ${t.ext || t.group ? "pt-1" : "pt-[7px]"}`}>
        {t.ext && <Drop value="Ext. In" label={`${t.name} input`} />}
        {t.ch && <Drop value={t.ch} label={`${t.name} input channel`} meter={1} />}
        {t.ch && (
          <div className="flex justify-between">
            <button type="button" className={`${KEY} w-[30px] bg-[#575757] text-[#c8c8c8]`}>In</button>
            <button type="button" className={`${KEY} w-[42px] bg-[#575757] text-[#c8c8c8]`}>Auto</button>
            <button type="button" className={`${KEY} w-[30px] bg-[#ffb333] text-[#1a1a1a]`}>Off</button>
          </div>
        )}
        <Drop value={t.group ? "Master" : t.out} label={`${t.name} output`} />
        <Slot label={`${t.name} output channel`} />
      </div>
      <div className={`ml-[3px] flex w-[184px] shrink-0 justify-between bg-[#414141] pl-[5px] ${gap}`}>
        <div className="relative flex w-[154px] flex-col gap-[7px] pt-1">
          <div className="flex gap-1.5">
            <button type="button" className={`${KEY} w-[74px] bg-[#ffb333] text-[#151515]`}>{t.num}</button>
            <button type="button" aria-label={`Solo ${t.name}`} className={`${KEY} w-[34px] bg-[#575757] text-[#cfcfcf]`}>S</button>
            {!t.group && (
              <button type="button" aria-label={`Arm ${t.name}`} className={`${KEY} w-[34px] bg-[#575757]`}>
                <span className="h-[11px] w-[11px] rounded-full bg-[#cfcfcf]" />
              </button>
            )}
          </div>
          <div className="flex gap-1.5">
            <Value value={t.vol} label={`${t.name} volume`} fill={t.fill} />
            <Value value="C" label={`${t.name} pan`} />
          </div>
          {three && (
            <div className="flex justify-between">
              {["A", "B", "C"].map((s) => <Value key={s} value="-inf" label={`${t.name} send ${s}`} className="w-12" />)}
            </div>
          )}
          {t.automated && <span className="absolute top-[30px] left-0 h-[9px] w-[9px] rounded-full border border-black bg-[#ff5a4c]" />}
        </div>
        <Meters />
      </div>
    </div>
  );
}

function Meters() {
  return (
    <div className="flex gap-0.5 py-px pr-[5px]">
      {[0, 1].map((i) => (
        <div key={i} className="flex w-[5px] flex-col gap-px">
          <div className="h-6 shrink-0 bg-[#1f1f1f]" />
          <div className="min-h-0 flex-1 bg-[#1f1f1f]" />
        </div>
      ))}
    </div>
  );
}

function TrackRow({ t, index }) {
  const gap = t.wideGap ? "mb-1" : "mb-[3px]";
  const h = t.group ? 110 : 56 + 56 * t.autos.length;
  return (
    <div className="flex">
      <div className={`relative min-w-0 flex-1 overflow-hidden ${gap} ${LANE} ${t.group ? "h-[110px]" : ""}`}>
        {t.group ? (
          <><GroupLines /><div className="h-[82px] border-b-2 border-[#343434]" /></>
        ) : (
          <>
            <div className="h-[28px] border-b-2 border-[#343434]" />
            <div className="h-[28px]" />
            {t.autos.map((_, i) => <div key={i} className="h-14 border-t-2 border-[#343434]" />)}
          </>
        )}
        {t.clips.map((c, i) => <Clip key={i} clip={c} track={t} height={h} seed={index * 31 + i * 3} />)}
      </div>
      <MixerRow t={t} />
    </div>
  );
}

/* ------------------------------------------------------------------ */
/* Top bar                                                            */
/* ------------------------------------------------------------------ */

const CELL = "flex h-[27px] shrink-0 items-center justify-center bg-[#282828] text-[#cfcfcf]";

function Ico({ children, w = 20, h = 20, className = "" }) {
  return (
    <svg width={w} height={h} viewBox={`0 0 ${w} ${h}`} fill="none" stroke="#cfcfcf" strokeWidth="1.8" className={className} aria-hidden="true">{children}</svg>
  );
}

function IconCell({ label, width, children, on }) {
  return <button type="button" aria-label={label} className={`${CELL} ${width} ${on ? "bg-[#ffb333]!" : ""}`}>{children}</button>;
}

function Position({ parts, className = "" }) {
  return (
    <div className={`${CELL} w-[132px] justify-end gap-[28px] pr-2 ${className}`}>
      {parts.map((p, i) => <span key={i}>{p}</span>)}
    </div>
  );
}

function TopBar() {
  return (
    <header className="grid h-14 shrink-0 grid-cols-[1fr_auto_1fr] items-center px-[13px]">
      <div className="flex gap-[3px]">
        <button type="button" className={`${CELL} w-[69px]`}>Link</button>
        <button type="button" className={`${CELL} w-[42px]`}>Tap</button>
        <input aria-label="Tempo" defaultValue="143.00" className={`${CELL} w-[68px] text-center`} />
        <IconCell label="Nudge down" width="w-7"><Ico w={19} h={16}><path d="M1 1V15M6.5 1V15M12 1V15M17.5 1V15" /></Ico></IconCell>
        <IconCell label="Nudge up" width="w-7"><Ico w={19} h={16}><path d="M1 1V15M6.5 1V15M11 1V15M14.5 1V15M17.8 1V15" /></Ico></IconCell>
        <div className={`${CELL} w-[71px] gap-[11px]`}><span>4</span><span>/</span><span>4</span></div>
        <button type="button" aria-label="Metronome" className={`${CELL} w-16 justify-end gap-3 pr-1`}>
          <Ico w={28} h={14}><circle cx="7" cy="7" r="5" /><circle cx="21" cy="7" r="6" fill="#cfcfcf" stroke="none" /></Ico>
          <Ico w={8} h={7}><path d="M0 0H8L4 7Z" fill="#cfcfcf" stroke="none" /></Ico>
        </button>
        <div className={`${CELL} relative w-[71px]`}>
          <select aria-label="Quantization" className="h-full w-full appearance-none pl-[6px]"><option>None</option></select>
          <Ico w={8} h={7} className="pointer-events-none absolute right-[5px]"><path d="M0 0H8L4 7Z" fill="#cfcfcf" stroke="none" /></Ico>
        </div>
      </div>
      <div className="flex items-center gap-[3px]">
        <IconCell label="Follow" width="w-[34px]"><Ico w={26} h={14}><path d="M1 7H10" /><path d="M9 1L17 7L9 13Z" fill="#cfcfcf" stroke="none" /><path d="M18 7H20.5M22.5 7H25" /></Ico></IconCell>
        <Position parts={["1.", "1.", "1"]} />
        <button type="button" aria-label="Play" className="ml-[29px]"><Ico w={21} h={24}><path d="M0 1L21 12L0 23Z" fill="#cfcfcf" stroke="none" /></Ico></button>
        <button type="button" aria-label="Stop" className="ml-[13px] h-[21px] w-[21px] bg-[#cfcfcf]" />
        <button type="button" aria-label="Record" className="ml-[13px] h-[21px] w-[21px] rounded-full bg-[#cfcfcf]" />
        <span className="w-[25px]" />
        <IconCell label="Overdub" width="w-7"><Ico><path d="M10 2V18M2 10H18" /></Ico></IconCell>
        <IconCell label="Automation arm" width="w-7"><Ico><circle cx="5" cy="15" r="2.8" /><circle cx="14" cy="5" r="2.8" /><path d="M7 13L12 7M14 8V14" /></Ico></IconCell>
        <IconCell label="Re-enable automation" width="w-7"><Ico w={16} h={14}><path d="M1 7L8 1V13Z" fill="#555" stroke="none" /><path d="M7 7H15" stroke="#555" /></Ico></IconCell>
        <IconCell label="Capture" width="w-7"><Ico w={18} h={18}><path d="M1.5 6V1.5H6M12 1.5H16.5V6M16.5 12V16.5H12M6 16.5H1.5V12" stroke="#666" /></Ico></IconCell>
        <IconCell label="Session record" width="w-7"><Ico w={18} h={18}><circle cx="9" cy="9" r="7" /></Ico></IconCell>
        <Position parts={["1.", "1.", "1"]} className="ml-[32px]" />
        <IconCell label="Punch in" width="w-[34px]"><Ico w={22} h={16}><path d="M1 2H7L14 14H21" /></Ico></IconCell>
        <IconCell label="Loop" width="w-[34px]" on><Ico w={24} h={20}><path d="M9 15.5H5a2.5 2.5 0 0 1-2.5-2.5V5A2.5 2.5 0 0 1 5 2.5H19A2.5 2.5 0 0 1 21.5 5V13A2.5 2.5 0 0 1 19 15.5H15" stroke="#1a1a1a" strokeWidth="2" /><path d="M9 15.5L15.5 11V20Z" fill="#1a1a1a" stroke="none" /></Ico></IconCell>
        <IconCell label="Punch out" width="w-[34px]"><Ico w={22} h={16}><path d="M1 14H7L14 2H21" /></Ico></IconCell>
        <Position parts={["256.", "0.", "0"]} />
      </div>
      <div className="flex justify-end gap-[3px]">
        <IconCell label="Draw mode" width="w-7"><Ico w={18} h={20}><path d="M3 12L11 1L16 4L9 14L3 16Z" fill="#cfcfcf" stroke="none" /><path d="M1 19H17" strokeWidth="2" /></Ico></IconCell>
        <IconCell label="Computer keyboard" width="w-7"><Ico w={18} h={18}><path d="M1 1H17V17H1Z" /><path d="M4.5 1H7V11H4.5ZM11 1H13.5V11H11Z" fill="#cfcfcf" stroke="none" /><path d="M6 10V17M12 10V17" /></Ico></IconCell>
        <button type="button" className={`${CELL} w-10`}>Key</button>
        <span className="flex w-3.5 flex-col gap-0.5"><span className="h-[12px] bg-[#282828]" /><span className="h-[13px] bg-[#282828]" /></span>
        <button type="button" className={`${CELL} w-[45px]`}>MIDI</button>
        <span className={`${CELL} w-[57px] justify-start border-l-2 border-[#b98530] pl-[10px]`}>6 %</span>
        <button type="button" className={`${CELL} w-7`}>D</button>
        <span className="flex w-[13px] flex-col gap-0.5"><span className="h-[12px] bg-[#282828]" /><span className="h-[13px] bg-[#282828]" /></span>
      </div>
    </header>
  );
}

/* ------------------------------------------------------------------ */
/* Rulers and locators                                                */
/* ------------------------------------------------------------------ */

function BarRuler() {
  return (
    <div className="grid h-[33px] shrink-0 grid-cols-[repeat(33,minmax(0,1fr))] border-r border-[#7a7a7a] text-[#9c9c9c]">
      {Array.from({ length: 33 }, (_, i) => (
        <div key={i} className="flex items-end">
          <span className="h-[11px] w-px bg-[#8a8a8a]" />
          <span className="w-1/2 pl-1.5">{1 + i * 8}</span>
          <span className="h-0.5 w-px bg-[#8a8a8a]" />
        </div>
      ))}
    </div>
  );
}

function TimeRuler() {
  return (
    <div className="flex h-[27px] min-w-0 flex-1 overflow-hidden bg-[#141414] text-[#a8a8a8]">
      {Array.from({ length: 23 }, (_, i) => (
        <div key={i} className="grid w-[4.512%] shrink-0 grid-cols-4">
          <span className="h-3 border-l border-[#8a8a8a] pt-[3px] pl-[3px]">{i < 22 ? `${Math.floor(i / 3)}:${["00", "20", "40"][i % 3]}` : ""}</span>
          <span className="h-1 border-l border-[#8a8a8a]" />
          <span className="h-1 border-l border-[#8a8a8a]" />
          <span className="h-1 border-l border-[#8a8a8a]" />
        </div>
      ))}
    </div>
  );
}

const barLeft = (bar) => `${(((bar - 1) / BARS) * 100).toFixed(3)}%`;

function RoundIcon({ label, children }) {
  return (
    <button type="button" aria-label={label} className="flex h-[30px] w-[30px] shrink-0 items-center justify-center rounded-full bg-[#272727]">{children}</button>
  );
}

function HeaderButtons() {
  return (
    <div className="flex w-[477px] shrink-0 flex-col gap-[6px] pt-[31px] pl-[8px]">
      <button type="button" className="flex h-[19px] w-[46px] items-center justify-center rounded-full bg-[#575757] leading-none text-[#cfcfcf]">Del</button>
      <div className="flex items-center">
        <button type="button" aria-label="Previous locator" className="flex h-[18px] w-[18px] items-center justify-center rounded-full bg-[#4e4e4e]"><Ico w={12} h={10}><path d="M12 5H2M6 1L2 5L6 9" stroke="#8a8a8a" /></Ico></button>
        <button type="button" aria-label="Next locator" className="ml-[9px] flex h-[18px] w-[18px] items-center justify-center rounded-full bg-[#575757]"><Ico w={12} h={10}><path d="M0 5H10M6 1L10 5L6 9" stroke="#e2e2e2" strokeWidth="2" /></Ico></button>
        <button type="button" aria-label="Automation mode" className="ml-5 flex h-[18px] w-[34px] items-center justify-center bg-[#69d7ff]"><Ico w={14} h={12}><g fill="#16161c" stroke="none"><circle cx="3" cy="9" r="2.6" /><circle cx="11" cy="3" r="2.6" /></g><path d="M3 9L11 3" stroke="#16161c" strokeWidth="2" /></Ico></button>
        <button type="button" aria-label="Lock envelopes" className="ml-[9px] flex h-[18px] w-[34px] items-center justify-center bg-[#575757]"><Ico w={12} h={13}><path d="M1 6H11V12H1Z" fill="#d8d8d8" stroke="none" /><path d="M3 6V4.5A3 3 0 0 1 9 4.5V6" stroke="#d8d8d8" /></Ico></button>
      </div>
    </div>
  );
}

function Locators() {
  return (
    <>
      {LOCATORS.map(([bar, name]) => (
        <div key={name} className="absolute top-[4px] bottom-[27px] -ml-px flex items-start border-l-2 border-[#9d9d9d]" style={{ left: barLeft(bar) }}>
          <svg className="h-[17px] w-[15px]" viewBox="0 0 15 17" aria-hidden="true"><path d="M0 0.5L13.5 8.5L0 16.5" fill="#454545" stroke="#a8a8a8" strokeWidth="1.5" /></svg>
          <span className="pl-0.5 leading-[17px] whitespace-nowrap text-[#d6d6d6]">{name}</span>
        </div>
      ))}
      <div className="absolute top-0 bottom-[27px] w-px bg-[#9d9d9d]" style={{ left: barLeft(257) }} />
    </>
  );
}

/* ------------------------------------------------------------------ */
/* Status bar                                                         */
/* ------------------------------------------------------------------ */

function DeviceThumb({ kind, width }) {
  const w = width;
  return (
    <svg width={w} height="25" viewBox={`0 0 ${w} 25`} className="shrink-0" aria-hidden="true">
      <rect width={w} height="25" fill="#3d3d3d" />
      <rect width={w} height="2.5" fill={kind === "rack" ? "#557c90" : "#555"} />
      {kind === "knobs" && [2, 8, 14].map((x) => <g key={x} fill="#5a5a5a"><rect x={x} y="6" width="4" height="3" /><rect x={x} y="12" width="4" height="3" /><rect x={x} y="19" width="4" height="3" /></g>)}
      {(kind === "eq" || kind === "eq2") && (
        <>
          <rect x="8" y="3" width="27" height="14" fill="#1c1c1c" />
          {kind === "eq" ? <path d="M8 9H21L26 17" stroke="#3d87a0" fill="none" /> : <path d="M8 11L14 9H35" stroke="#4a4a4a" fill="none" />}
          {[8, 13, 18, 23, 28, 33].map((x) => <rect key={x} x={x} y="19" width="3" height="2" fill={kind === "eq" ? "#c98f30" : "#777"} />)}
          {[38, 44, 49].map((x) => <g key={x} fill="#5e5e5e"><rect x={x} y="5" width="3" height="3" /><rect x={x} y="12" width="3" height="3" /><rect x={x} y="19" width="3" height="3" /></g>)}
          <rect x="2" y="8" width="3" height="10" fill="#666" />
        </>
      )}
      {(kind === "rack" || kind === "plug") && (
        <>
          <rect x="1.5" y="6" width="18" height="16" fill="#181818" stroke="#666" strokeWidth="0.6" />
          <rect x="22" y="5" width="11" height="19" fill="#4a4a4a" />
        </>
      )}
      <rect x={w - 1.5} y="11" width="1.5" height="4" fill="#3fae3f" />
    </svg>
  );
}

function StatusBar() {
  return (
    <footer className="flex h-[62px] shrink-0 items-center pt-[1px] pr-[13px] pl-[13px]">
      <RoundIcon label="Show help"><Ico w={14} h={16}><path d="M1 1L13 8L1 15Z" fill="#444" stroke="none" /></Ico></RoundIcon>
      <div className="ml-[13px] flex h-[34px] min-w-0 flex-1 items-center rounded-[3px] border-4 border-[#272727] bg-[#414141] pl-3 text-[#d0d0d0]">Insert Mark 1.1.1 (Time: 0:00)</div>
      <div className="ml-[13px] h-[34px] w-[332px] rounded-[3px] border-4 border-[#272727] bg-[#414141]" />
      <div className="ml-[13px] flex h-[34px] w-[263px] items-center gap-[3px] rounded-[3px] bg-[#272727] pl-2">
        <span className="w-[44px] font-semibold text-[#e2e2e2]">Lows</span>
        <DeviceThumb kind="knobs" width={21} />
        <DeviceThumb kind="eq" width={55} />
        <DeviceThumb kind="eq2" width={55} />
        <DeviceThumb kind="rack" width={34} />
        <DeviceThumb kind="plug" width={34} />
      </div>
      <div className="ml-[13px]"><RoundIcon label="Hide device view"><Ico w={18} h={14}><path d="M1 7L16 1V13Z" fill="#3c3c3c" stroke="#4a4a4a" /></Ico></RoundIcon></div>
    </footer>
  );
}

/* ------------------------------------------------------------------ */

export default function App() {
  return (
    <div className="flex h-screen flex-col overflow-hidden bg-[#363636] font-['Inter','Liberation_Sans',sans-serif] text-[15px] leading-5 font-medium">
      <TopBar />
      <div className="flex min-h-0 flex-1">
        <aside className="flex w-[50px] shrink-0 flex-col items-center justify-between pl-[6px]">
          <RoundIcon label="Show browser"><Ico w={16} h={18}><path d="M1 2H15L8 16Z" stroke="#484848" fill="#303030" /></Ico></RoundIcon>
          <RoundIcon label="Groove pool"><Ico w={20} h={16}><path d="M1 6C5 0 8 2 10 5S16 7 19 2M1 13C5 7 8 9 10 12S16 14 19 9" stroke="#484848" /></Ico></RoundIcon>
        </aside>

        <main className="mr-[13px] flex min-w-0 flex-1 flex-col">
          <div className="flex shrink-0">
            <div className="min-w-0 flex-1 rounded-tl-[6px] rounded-tr-[6px] bg-[#131313] pt-[6px] pr-[5px] pl-[6px]">
              <div className="h-[119px] border-4 border-black bg-[#414141]"><Overview /></div>
            </div>
            <div className="flex w-[38px] shrink-0 flex-col">
              <div className="flex h-[74px] flex-col items-end gap-[7px]">
                <button type="button" aria-label="Arrangement view" className="flex h-[30px] w-[30px] flex-col items-center justify-center gap-[3px] rounded-full bg-[#141414]">
                  {[0, 1, 2].map((i) => <span key={i} className="h-[3px] w-[18px] bg-[#ffb333]" />)}
                </button>
                <button type="button" aria-label="Session view" className="flex h-[30px] w-[30px] items-center justify-center gap-1 rounded-full bg-[#141414]">
                  {[0, 1, 2].map((i) => <span key={i} className="h-[18px] w-[3px] bg-[#3e3e3e]" />)}
                </button>
              </div>
              <div className="flex-1 rounded-tr-[6px] bg-[#131313]" />
            </div>
          </div>

          <div className="flex min-h-0 flex-1 rounded-b-[6px] bg-[#131313] pl-[7px]">
            <div className="flex min-w-0 flex-1 flex-col">
              <div className="flex h-[83px] shrink-0">
                <div className="flex min-w-0 flex-1 flex-col">
                  <BarRuler />
                  <div className={`h-[18px] shrink-0 ${LANE}`}>
                    <div className="flex h-full w-[96.970%] items-center justify-between border-y-2 border-[#a3a3a3] bg-[#555]">
                      <Ico w={14} h={14}><path d="M1 0L13 7L1 14" stroke="#b0b0b0" /></Ico>
                      <Ico w={14} h={14}><path d="M13 0L3 7L13 14" stroke="#b0b0b0" /></Ico>
                    </div>
                  </div>
                  <div className={`h-[21px] shrink-0 ${LANE}`} />
                  <div className="min-h-0 flex-1 bg-[#282828] pt-[3px]">
                    <Ico w={6} h={8}><path d="M0 0H6L0 8Z" fill="#69d7ff" stroke="none" /></Ico>
                  </div>
                </div>
                <HeaderButtons />
              </div>

              <div className="relative -mt-[32px] flex min-h-0 flex-1 flex-col pt-[32px]">
                <div className="relative min-h-0 flex-1 overflow-hidden bg-[#282828]">
                  <div className="mb-[3px] flex h-[5px]">
                    <div className={`min-w-0 flex-1 ${LANE}`} />
                    <div className="flex w-[477px] shrink-0 pl-[3px]">
                      <div className="-mb-[3px] w-[7px] bg-[#5480e4]" />
                      <div className="ml-0.5 w-[156px] bg-[#465069]" />
                      <div className="ml-[3px] w-[119px] bg-[#414141]" />
                      <div className="ml-[3px] w-[184px] bg-[#414141]" />
                    </div>
                  </div>
                  {TRACKS.map((t, i) => <TrackRow key={t.num} t={t} index={i} />)}
                  <div className="pointer-events-none absolute top-0 right-[477px] left-0"><Automation /></div>
                </div>

                <div className="flex h-[31px] shrink-0 bg-[#282828] pt-[5px]">
                  <div className={`flex min-w-0 flex-1 items-center justify-end pr-1 font-['Liberation_Sans',sans-serif] text-[30px] font-bold text-[#222] ${LANE}`}>2/1</div>
                  <div className="flex w-[477px] shrink-0 pl-[3px]">
                    <div className="flex w-[165px] items-center gap-[20px] bg-[#414141] pl-[6px]">
                      <button type="button" aria-label="Unfold Master"><Ico w={21} h={21}><circle cx="10.5" cy="10.5" r="9.4" /><path d="M7.5 5.5L15 10.5L7.5 15.5Z" fill="#cfcfcf" stroke="none" /></Ico></button>
                      <span className="font-semibold text-[#e4e4e4]">Master</span>
                    </div>
                    <div className="ml-[3px] w-[119px] bg-[#414141] px-[3px] pt-[3px]"><Drop value="1/2" label="Master output" meter={2} /></div>
                    <div className="ml-[3px] flex w-[184px] justify-between bg-[#414141] pl-[5px]">
                      <div className="flex gap-1.5 pt-[3px]">
                        <Value value="0" label="Master volume" fill={84} />
                        <Value value="0" label="Cue volume" fill={84} color="#2a62c0" />
                      </div>
                      <Meters />
                    </div>
                  </div>
                </div>

                <div className="flex shrink-0">
                  <TimeRuler />
                  <div className="w-[477px] shrink-0" />
                </div>
                <div className="pointer-events-none absolute inset-y-0 right-[477px] left-0"><Locators /></div>
              </div>
            </div>

            <div className="flex w-[43px] shrink-0 flex-col items-center justify-between pt-[70px] pb-[40px]">
              <div className="h-[919px] w-[14px] rounded-full bg-[#323232]" />
              <div className="flex flex-col gap-[9px]">
                {["I·O", "R", "M", "D"].map((s, i) => (
                  <button key={s} type="button" className={`flex h-[21px] w-[21px] items-center justify-center rounded-full text-[10px] font-bold text-[#1a1a1a] ${i % 2 ? "bg-[#6e6e6e]" : "bg-[#ffb333]"}`}>{s}</button>
                ))}
              </div>
            </div>
          </div>
        </main>
      </div>
      <StatusBar />
    </div>
  );
}
